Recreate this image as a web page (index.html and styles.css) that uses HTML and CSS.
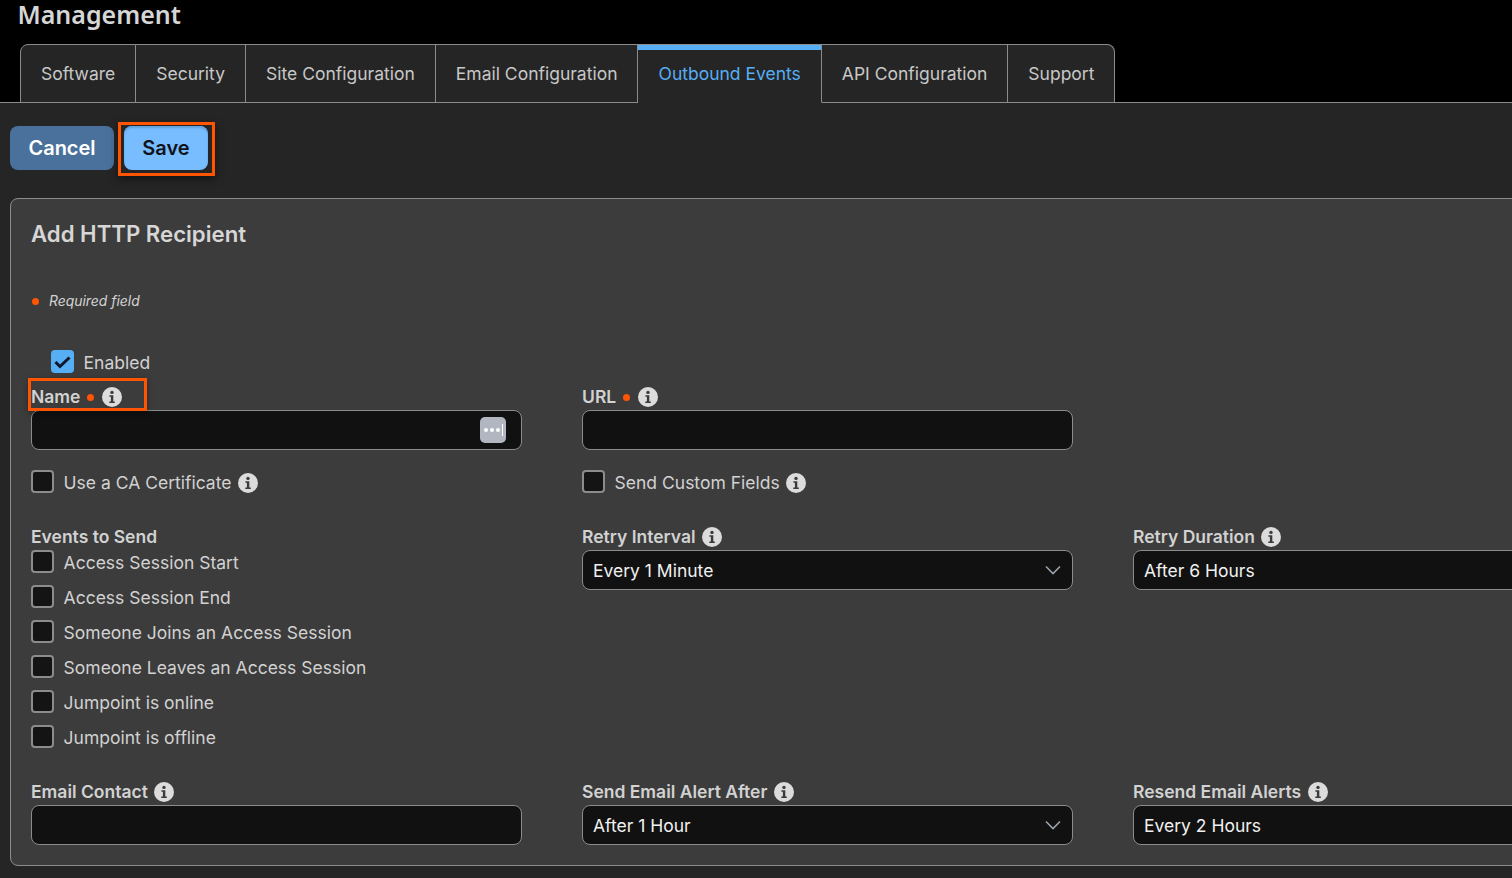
FILE: index.html
```html
<!DOCTYPE html>
<html lang="en">
<head>
<meta charset="utf-8">
<title>Management</title>
<link rel="stylesheet" href="styles.css">
</head>
<body>
<svg class="defs" width="0" height="0" aria-hidden="true">
  <symbol id="info" viewBox="0 0 20 20">
    <circle cx="10" cy="10" r="10" fill="#dcdcdc"/>
    <circle cx="10" cy="5.4" r="1.7" fill="#3a3a3a"/>
    <path d="M7.4 8.2h3.9v6.3h1.5v1.6H7.3v-1.6h1.6V9.8H7.4z" fill="#3a3a3a"/>
  </symbol>
  <symbol id="chev" viewBox="0 0 16 10">
    <path d="M1 1.5 8 8.5l7-7" fill="none" stroke="#9aa3ad" stroke-width="1.6"/>
  </symbol>
</svg>
<header class="top">
  <h1 class="page-title">Management</h1>
  <nav class="tabs">
    <a class="tab">Software</a>
    <a class="tab">Security</a>
    <a class="tab">Site Configuration</a>
    <a class="tab email-tab">Email Configuration</a>
    <a class="tab active">Outbound Events</a>
    <a class="tab">API Configuration</a>
    <a class="tab">Support</a>
  </nav>
</header>
<main class="content">
  <div class="actions">
    <button class="btn cancel">Cancel</button>
    <span class="mark save-mark"><button class="btn save">Save</button></span>
  </div>
  <section class="panel">
    <h2 class="panel-title">Add HTTP Recipient</h2>
    <p class="required"><span class="dot"></span><em>Required field</em></p>
    <label class="check enabled"><span class="box on"><svg width="22" height="22" viewBox="0 0 22 22"><path d="M3.5 11l4.5 4.5 9.5-9" fill="none" stroke="#10182a" stroke-width="3"/></svg></span>Enabled</label>
    <div class="grid">
      <div class="field">
        <div class="label name-mark">Name<span class="dot"></span><svg class="info"><use href="#info"/></svg></div>
        <div class="input"><span class="dots"><i></i><i></i><i></i><b></b></span></div>
      </div>
      <div class="field">
        <div class="label">URL<span class="dot"></span><svg class="info"><use href="#info"/></svg></div>
        <div class="input"></div>
      </div>
      <div class="spacer"></div>
      <label class="check cert"><span class="box"></span>Use a CA Certificate<svg class="info"><use href="#info"/></svg></label>
      <label class="check cert"><span class="box"></span>Send Custom Fields<svg class="info"><use href="#info"/></svg></label>
      <div class="spacer"></div>
      <div class="field events">
        <div class="label">Events to Send</div>
        <label class="check ev"><span class="box"></span>Access Session Start</label>
        <label class="check ev"><span class="box"></span>Access Session End</label>
        <label class="check ev"><span class="box"></span>Someone Joins an Access Session</label>
        <label class="check ev"><span class="box"></span>Someone Leaves an Access Session</label>
        <label class="check ev"><span class="box"></span>Jumpoint is online</label>
        <label class="check ev"><span class="box"></span>Jumpoint is offline</label>
      </div>
      <div class="field">
        <div class="label">Retry Interval<svg class="info"><use href="#info"/></svg></div>
        <div class="input select">Every 1 Minute<svg class="chev"><use href="#chev"/></svg></div>
      </div>
      <div class="field">
        <div class="label">Retry Duration<svg class="info"><use href="#info"/></svg></div>
        <div class="input select">After 6 Hours<svg class="chev"><use href="#chev"/></svg></div>
      </div>
      <div class="field">
        <div class="label">Email Contact<svg class="info"><use href="#info"/></svg></div>
        <div class="input"></div>
      </div>
      <div class="field">
        <div class="label">Send Email Alert After<svg class="info"><use href="#info"/></svg></div>
        <div class="input select">After 1 Hour<svg class="chev"><use href="#chev"/></svg></div>
      </div>
      <div class="field">
        <div class="label">Resend Email Alerts<svg class="info"><use href="#info"/></svg></div>
        <div class="input select">Every 2 Hours<svg class="chev"><use href="#chev"/></svg></div>
      </div>
    </div>
  </section>
</main>
</body>
</html>
```
FILE: styles.css
```css
*, *::before { box-sizing: border-box; }
html, body { margin: 0; height: 100%; overflow: hidden; }
body { background: #252525; color: #d2d2d2; font-family: Inter, "Liberation Sans", sans-serif; font-size: 17.5px; width: 1512px; }
.defs { display: block; height: 0; }

.top { background: #000; height: 103px; border-bottom: 1px solid #8c8c8c; padding-left: 17.5px; }
.page-title { margin: 0; height: 44px; font: 600 25px/29px "Noto Sans", sans-serif; color: #d6d6d6; }
.tabs { display: flex; margin-left: 2.5px; height: 59px; }
.tab { display: flex; align-items: center; height: 59px; padding: 1px 20px 0; background: #252525; border: 1px solid #8c8c8c; border-left: 0; color: #c8c8c8; line-height: 1; }
.tab:first-child { border-left: 1px solid #8c8c8c; border-top-left-radius: 8px; }
.tab:last-child { border-top-right-radius: 8px; }
.email-tab { padding-right: 19.5px; }
.tab.active { color: #56aef5; border-bottom-color: #252525; box-shadow: inset 0 5px 0 #56aef5; padding-left: 20.5px; }

.content { padding: 0 0 0 10px; width: 1900px; }
.actions { display: flex; align-items: flex-start; height: 95px; gap: 4px; }
.btn { border: 0; border-radius: 8px; height: 44px; font: 600 20px/44px Inter, sans-serif; padding: 0; }
.cancel { width: 104px; margin-top: 23px; background: #4a719c; color: #fff; }
.save { width: 84px; background: #78bdff; color: #10141a; display: block; box-shadow: inset 0 2px 2px #5fa0dc; }
.mark { border: 3px solid #ff5500; box-shadow: 0 3px 8px rgba(0,0,0,.5); }
.save-mark { padding: 1px 4px 3px 3px; width: 97px; height: 54px; margin-top: 19px; }

.panel { background: #3c3c3c; border: 1px solid #8c8c8c; border-radius: 8px; height: 668px; padding: 0 20px; }
.panel-title { margin: 0; padding-top: 20px; height: 92px; font: 600 22.2px/30px Inter, sans-serif; color: #d6d6d6; }
.required { display: flex; align-items: center; margin: 0; height: 20px; font-size: 13.9px; color: #d2d2d2; }
.required .dot { margin: 0 10px 0 1px; }
.dot { display: inline-block; width: 7px; height: 7px; border-radius: 50%; background: #ff5500; flex: none; }

.check { display: flex; align-items: center; color: #d2d2d2; line-height: 22px; height: 26px; }
.box { width: 23px; height: 23px; flex: none; margin: 0 9.6px 3px 0; border: 2px solid #8c8c8c; border-radius: 4px; background: #141414; display: block; }
.box.on { border: 0; background: #56aef5; }
.box svg { display: block; margin: 1px 0 0 1px; }
.enabled { margin: 39px 0 0 20px; }

.grid { display: grid; grid-template-columns: repeat(3, 491px); column-gap: 60px; margin-top: 6px; }
.field { display: block; }
.label { display: flex; align-items: center; height: 28px; font-weight: 600; color: #d2d2d2; white-space: nowrap; }
.label .dot { margin-left: 7px; margin-top: 2px; }
.info { width: 20px; height: 20px; margin-left: 6.5px; flex: none; }
.label .info { margin-top: 2px; }
.label .dot + .info { margin-left: 7.5px; }
.input { display: flex; align-items: center; justify-content: space-between; height: 40px; padding: 0 11px 0 10px; background: #111; border: 1px solid #8c8c8c; border-radius: 8px; color: #f0f0f0; }
.chev { width: 16px; height: 10px; }
.dots { display: flex; align-items: center; justify-content: center; gap: 2px; width: 26px; height: 26px; margin: 0 4px 0 auto; background: #b2b6c0; border-radius: 5px; }
.dots i { width: 4px; height: 4px; border-radius: 50%; background: #fff; }
.dots b { width: 1px; height: 12px; background: #fff; }
.spacer { height: 1px; }
.cert { margin: 20px 0 26px; }
.events { height: 255px; }
.ev { margin-bottom: 9px; }
.name-mark { position: relative; }
.name-mark::before { content: ""; position: absolute; left: -3px; top: -4px; width: 119px; height: 33px; border: 3px solid #ff5500; box-shadow: 0 2px 6px rgba(0,0,0,.35); }
```
